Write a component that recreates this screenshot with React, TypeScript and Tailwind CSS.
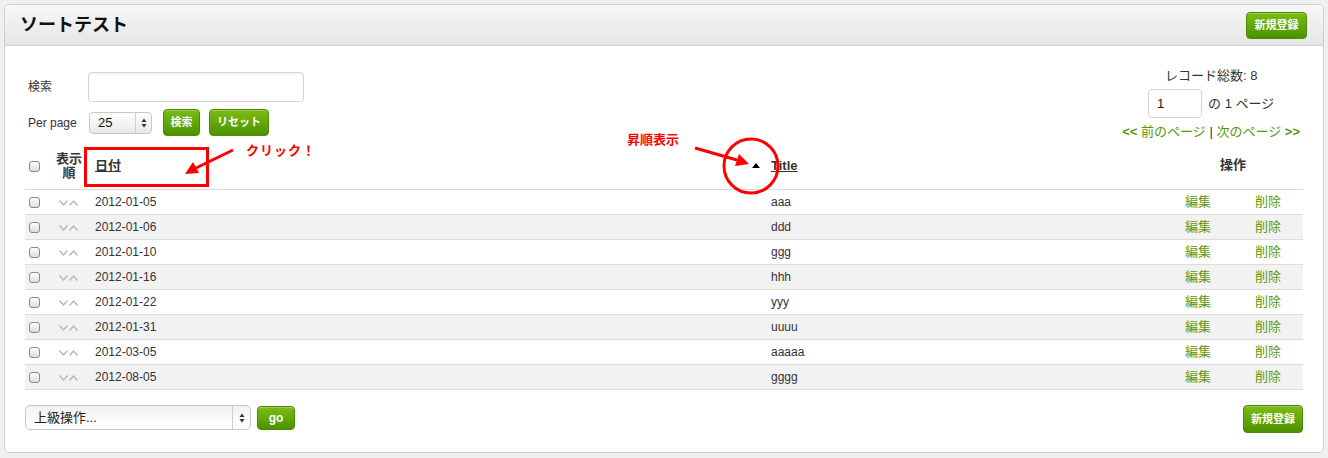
import React from "react";

const rows = [
  { date: "2012-01-05", title: "aaa" },
  { date: "2012-01-06", title: "ddd" },
  { date: "2012-01-10", title: "ggg" },
  { date: "2012-01-16", title: "hhh" },
  { date: "2012-01-22", title: "yyy" },
  { date: "2012-01-31", title: "uuuu" },
  { date: "2012-03-05", title: "aaaaa" },
  { date: "2012-08-05", title: "gggg" },
];

const font = { fontFamily: '"Liberation Sans", "Noto Sans CJK JP", sans-serif' };

function GreenButton({ children, className = "" }: { children: React.ReactNode; className?: string }) {
  return (
    <button
      className={
        "rounded-[4px] border border-[#4a8a06] bg-gradient-to-b from-[#7cbd14] to-[#4b9200] text-[11px] font-bold text-white shadow-[inset_0_1px_0_rgba(255,255,255,0.25)] " +
        className
      }
    >
      {children}
    </button>
  );
}

function Checkbox() {
  return (
    <span className="inline-block h-[11px] w-[11px] rounded-[3px] border border-[#8a8a8a] bg-gradient-to-b from-white to-[#dcdcdc] align-middle" />
  );
}

function SortIcons() {
  return (
    <span className="inline-flex items-center gap-[1px]">
      <svg width="9" height="6" viewBox="0 0 9 6">
        <path d="M0.5 0.5 L4.5 5 L8.5 0.5" fill="none" stroke="#b5b5b5" strokeWidth="1.3" />
      </svg>
      <svg width="9" height="6" viewBox="0 0 9 6">
        <path d="M0.5 5.5 L4.5 1 L8.5 5.5" fill="none" stroke="#b5b5b5" strokeWidth="1.3" />
      </svg>
    </span>
  );
}

function Spinner() {
  return (
    <svg width="6" height="10" viewBox="0 0 6 10">
      <path d="M3 0.5 L5.5 4 L0.5 4 Z" fill="#333" />
      <path d="M3 9.5 L5.5 6 L0.5 6 Z" fill="#333" />
    </svg>
  );
}

export default function App() {
  return (
    <div className="relative h-[458px] w-[1328px] bg-[#efefef] p-1 text-[#333]" style={font}>
      <div className="flex h-[449px] flex-col rounded-[5px] border border-[#cfcfcf] bg-white">
        {/* header */}
        <div className="flex h-[41px] items-center justify-between rounded-t-[5px] border-b border-[#d0d0d0] bg-gradient-to-b from-[#f7f7f7] to-[#e6e6e6] pl-[15px] pr-[16px]">
          <h1 className="text-[18px] font-bold text-[#111]">ソートテスト</h1>
          <GreenButton className="h-[27px] w-[61px]">新規登録</GreenButton>
        </div>

        <div className="flex flex-1 flex-col px-5">
          {/* search + pager */}
          <div className="flex justify-between">
            <div className="pl-[3px] pt-[26px]">
              <div className="flex items-center">
                <span className="w-[60px] text-[12px]">検索</span>
                <div className="h-[30px] w-[216px] rounded-[4px] border border-[#d5d5d5] bg-white shadow-[inset_0_1px_2px_rgba(0,0,0,0.06)]" />
              </div>
              <div className="mt-[7px] flex items-center">
                <span className="w-[61px] text-[12px]">Per page</span>
                <div className="flex h-[22px] w-[63px] items-center rounded-[4px] border border-[#c8c8c8] bg-gradient-to-b from-white to-[#e8e8e8]">
                  <span className="flex-1 pl-[8px] text-[13px] text-[#111]">25</span>
                  <span className="flex h-full w-[16px] items-center justify-center border-l border-[#d0d0d0]">
                    <Spinner />
                  </span>
                </div>
                <GreenButton className="ml-[11px] h-[27px] w-[37px]">検索</GreenButton>
                <GreenButton className="ml-[9px] h-[27px] w-[60px]">リセット</GreenButton>
              </div>
            </div>
            <div className="flex flex-col items-center pr-[3px] pt-[22px] text-[13px]">
              <span className="leading-[16px]">レコード総数: 8</span>
              <div className="mt-[5px] flex items-center">
                <div className="flex h-[29px] w-[54px] items-center rounded-[4px] border border-[#d5d5d5] pl-[8px] text-[13px] text-[#111]">
                  1
                </div>
                <span className="ml-[6px]">の 1 ページ</span>
              </div>
              <div className="mt-[4px] text-[13px] text-[#4f9a0a]">
                <span className="font-bold">&lt;&lt;</span> 前のページ <span className="text-[#333]">|</span> 次のページ{" "}
                <span className="font-bold">&gt;&gt;</span>
              </div>
            </div>
          </div>

          {/* table */}
          <table className="mt-[6px] w-full border-collapse text-[12px]">
            <colgroup>
              <col className="w-[25px]" />
              <col className="w-[38px]" />
              <col className="w-[677px]" />
              <col />
              <col className="w-[70px]" />
              <col className="w-[70px]" />
            </colgroup>
            <thead>
              <tr className="h-[42px] border-b border-[#dcdcdc]">
                <th className="pb-[6px] pl-[4px] text-left">
                  <Checkbox />
                </th>
                <th className="pb-[4px] text-center text-[13px] leading-[14px] font-bold">
                  表示
                  <br />順
                </th>
                <th className="pb-[6px] pl-[7px] text-left text-[13px] font-bold">
                  <span className="underline">日付</span>
                </th>
                <th className="relative pb-[6px] pl-[6px] text-left text-[13px] font-bold">
                  <svg className="absolute left-[-13px] top-[15px]" width="8" height="5" viewBox="0 0 8 5">
                    <path d="M4 0 L8 5 L0 5 Z" fill="#000" />
                  </svg>
                  <span className="underline">Title</span>
                </th>
                <th colSpan={2} className="pb-[8px] text-center text-[13px] font-bold">
                  操作
                </th>
              </tr>
            </thead>
            <tbody>
              {rows.map((r, i) => (
                <tr key={r.date} className={"h-[25px] border-b border-[#dcdcdc] " + (i % 2 === 1 ? "bg-[#f2f2f2]" : "bg-white")}>
                  <td className="pl-[4px]">
                    <Checkbox />
                  </td>
                  <td className="pl-[9px]">
                    <SortIcons />
                  </td>
                  <td className="pl-[7px]">{r.date}</td>
                  <td className="pl-[6px]">{r.title}</td>
                  <td className="text-center text-[13px] text-[#5d9a12]">編集</td>
                  <td className="text-center text-[13px] text-[#5d9a12]">削除</td>
                </tr>
              ))}
            </tbody>
          </table>

          {/* footer */}
          <div className="mt-[15px] flex items-start justify-between">
            <div className="flex items-center">
              <div className="flex h-[25px] w-[226px] items-center rounded-[5px] border border-[#c8c8c8] bg-gradient-to-b from-[#f2f2f2] to-white">
                <span className="flex-1 pl-[8px] text-[13px] text-[#222]">上級操作...</span>
                <span className="flex h-full w-[18px] items-center justify-center border-l border-[#d0d0d0]">
                  <Spinner />
                </span>
              </div>
              <GreenButton className="ml-[6px] h-[24px] w-[38px] text-[12px]">go</GreenButton>
            </div>
            <GreenButton className="h-[28px] w-[60px]">新規登録</GreenButton>
          </div>
        </div>
      </div>

      {/* annotations */}
      <div className="absolute left-[84px] top-[147px] h-[40px] w-[125px] border-[3px] border-[#ff0000]" />
      <span className="absolute left-[246px] top-[141px] text-[13px] font-bold tracking-[1px] text-[#ff0000]">クリック！</span>
      <span className="absolute left-[627px] top-[130px] text-[13px] font-bold text-[#ff0000]">昇順表示</span>
      <svg className="pointer-events-none absolute left-0 top-0" width="1328" height="458">
        <line x1="233" y1="150" x2="196" y2="168" stroke="#ff0000" strokeWidth="3" />
        <path d="M185 174 L193 162 L199 173 Z" fill="#ff0000" />
        <line x1="695" y1="148" x2="737" y2="160" stroke="#ff0000" strokeWidth="3" />
        <path d="M749 164 L735 166 L739 154 Z" fill="#ff0000" />
        <ellipse cx="751" cy="166" rx="27" ry="27" fill="none" stroke="#ff0000" strokeWidth="3" />
      </svg>
    </div>
  );
}
